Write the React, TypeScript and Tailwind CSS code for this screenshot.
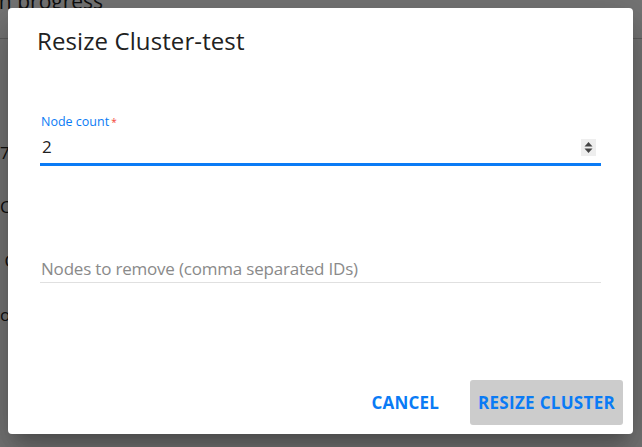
import React from "react";

function Spinner() {
  return (
    <div className="flex h-[17px] w-[15px] items-center justify-center bg-[#eeeeee]">
      <svg width="9" height="13" viewBox="0 0 9 13">
        <path d="M4.5 1 L8.5 5.5 L0.5 5.5 Z" fill="#444" />
        <path d="M0.5 7.5 L8.5 7.5 L4.5 12 Z" fill="#444" />
      </svg>
    </div>
  );
}

export default function App() {
  return (
    <div className="relative h-[447px] w-[642px] overflow-hidden bg-white font-['Open_Sans',sans-serif]">
      {/* background page */}
      <div className="flex flex-col text-[#222]">
        <div className="h-[39px] border-b border-[#ccc]">
          <div className="-ml-[7px] -mt-[12px] text-[21px] leading-[26px]">In progress</div>
        </div>
        <div className="flex flex-col gap-[34px] pt-[104px] text-[17px] leading-[20px]">
          <div>7</div>
          <div>C</div>
          <div>&nbsp;C</div>
          <div>ol</div>
        </div>
      </div>
      {/* overlay */}
      <div className="absolute inset-0 bg-[rgba(0,0,0,0.54)]" />
      {/* dialog */}
      <div className="absolute left-[8px] top-[8px] flex h-[426px] w-[625px] flex-col rounded-[4px] bg-white shadow-[0_11px_15px_-7px_rgba(0,0,0,0.2),0_24px_38px_3px_rgba(0,0,0,0.14),0_9px_46px_8px_rgba(0,0,0,0.12)]">
        <h2 className="pl-[29px] pt-[18px] text-[24px] font-medium leading-[30px] tracking-[0.1px] text-[#212121]">
          Resize Cluster-test
        </h2>
        <div className="flex flex-1 flex-col px-[32px] pt-[59px]">
          <div className="flex flex-col">
            <label className="pl-[1px] text-[12.5px] leading-[14px] text-[#0a7bf5]">
              Node count<span className="ml-[2px] align-top text-[10px] text-[#f44336]">*</span>
            </label>
            <div className="flex h-[37px] items-center justify-between border-b-[3px] border-[#0a7bf5] pl-[2px] pr-[5px] pt-[2px]">
              <span className="text-[17px] text-[#212121]">2</span>
              <Spinner />
            </div>
          </div>
          <div className="mt-[90px] flex h-[27px] items-center border-b border-[#e0e0e0] pl-[1px]">
            <span className="text-[17px] tracking-[-0.2px] text-[#8a8a8a]">
              Nodes to remove (comma separated IDs)
            </span>
          </div>
        </div>
        <div className="flex items-center justify-end gap-[15px] pb-[9px] pr-[10px]">
          <button className="h-[45px] px-[16px] text-[17px] font-bold tracking-[0.2px] text-[#0a7bf5]">
            CANCEL
          </button>
          <button className="h-[45px] rounded-[3px] bg-[#cccccc] px-[8px] text-[17px] font-bold tracking-[0.3px] text-[#0a7bf5]">
            RESIZE CLUSTER
          </button>
        </div>
      </div>
    </div>
  );
}
